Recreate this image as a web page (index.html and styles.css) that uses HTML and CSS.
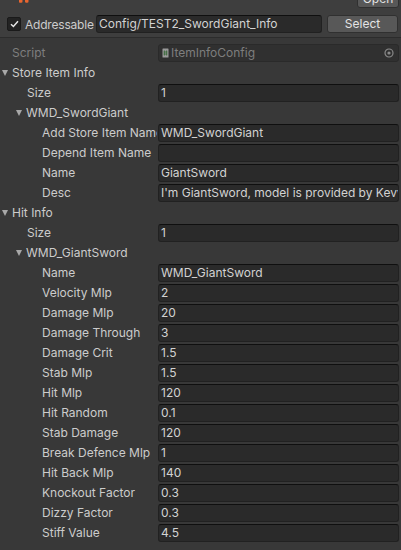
FILE: index.html
```html
<!DOCTYPE html>
<html>
<head>
<meta charset="utf-8">
<link rel="stylesheet" href="styles.css">
</head>
<body>
<div class="header">
  <div class="strip">
    <svg class="logo" width="10" height="4" viewBox="0 0 10 4"><path d="M0 0h3.5v1.2a1.4 1.4 0 0 1-1.4 1.6H1.4A1.4 1.4 0 0 1 0 1.2z M6 0h3.5v1.2a1.4 1.4 0 0 1-1.4 1.6H7.4A1.4 1.4 0 0 1 6 1.2z" fill="#e8652f"/></svg>
    <div class="btn open">Open</div>
  </div>
  <div class="addr-row">
    <span class="check"><svg width="9" height="8" viewBox="0 0 9 8"><path d="M1 4.2 3.4 6.5 8 1.2" fill="none" stroke="#e6e6e6" stroke-width="1.5"/></svg></span>
    <span class="addr-label">Addressable</span>
    <div class="field addr-field">Config/TEST2_SwordGiant_Info</div>
    <div class="btn select">Select</div>
  </div>
</div>
<div class="body">
  <div class="row disabled"><span class="label l0">Script</span><div class="field obj"><svg class="cs" width="7" height="10" viewBox="0 0 7 10"><rect x="0.5" y="0.5" width="6" height="9" rx="0.5" fill="#9a9a9a"/><path d="M2.4 2.5v5M4.6 2.5v5M1.6 4h3.8M1.6 6h3.8" stroke="#3e6b3e" stroke-width="0.9"/></svg><span class="objtext">ItemInfoConfig</span><svg class="target" width="10" height="10" viewBox="0 0 10 10"><circle cx="5" cy="5" r="4" fill="none" stroke="#8a8a8a" stroke-width="1.2"/><circle cx="5" cy="5" r="1.6" fill="#8a8a8a"/></svg></div></div>
  <div class="row"><span class="label fold f0"><i class="arrow"></i>Store Item Info</span></div>
  <div class="row"><span class="label l1">Size</span><div class="field">1</div></div>
  <div class="row"><span class="label fold f1"><i class="arrow"></i>WMD_SwordGiant</span></div>
  <div class="row"><span class="label l2">Add Store Item Name</span><div class="field">WMD_SwordGiant</div></div>
  <div class="row"><span class="label l2">Depend Item Name</span><div class="field"></div></div>
  <div class="row"><span class="label l2">Name</span><div class="field">GiantSword</div></div>
  <div class="row"><span class="label l2">Desc</span><div class="field">I'm GiantSword, model is provided by Kevvin</div></div>
  <div class="row"><span class="label fold f0"><i class="arrow"></i>Hit Info</span></div>
  <div class="row"><span class="label l1">Size</span><div class="field">1</div></div>
  <div class="row"><span class="label fold f1"><i class="arrow"></i>WMD_GiantSword</span></div>
  <div class="row"><span class="label l2">Name</span><div class="field">WMD_GiantSword</div></div>
  <div class="row"><span class="label l2">Velocity Mlp</span><div class="field">2</div></div>
  <div class="row"><span class="label l2">Damage Mlp</span><div class="field">20</div></div>
  <div class="row"><span class="label l2">Damage Through</span><div class="field">3</div></div>
  <div class="row"><span class="label l2">Damage Crit</span><div class="field">1.5</div></div>
  <div class="row"><span class="label l2">Stab Mlp</span><div class="field">1.5</div></div>
  <div class="row"><span class="label l2">Hit Mlp</span><div class="field">120</div></div>
  <div class="row"><span class="label l2">Hit Random</span><div class="field">0.1</div></div>
  <div class="row"><span class="label l2">Stab Damage</span><div class="field">120</div></div>
  <div class="row"><span class="label l2">Break Defence Mlp</span><div class="field">1</div></div>
  <div class="row"><span class="label l2">Hit Back Mlp</span><div class="field">140</div></div>
  <div class="row"><span class="label l2">Knockout Factor</span><div class="field">0.3</div></div>
  <div class="row"><span class="label l2">Dizzy Factor</span><div class="field">0.3</div></div>
  <div class="row"><span class="label l2">Stiff Value</span><div class="field">4.5</div></div>
</div>
</body>
</html>
```
FILE: styles.css
```css
html, body {
  margin: 0;
  padding: 0;
  background: #383838;
  font-family: Inter, "Noto Sans", sans-serif;
  font-size: 12px;
  color: #cccccc;
  overflow: hidden;
}
.header {
  background: #3e3e3e;
  height: 37px;
  border-bottom: 1px solid #2c2c2c;
}
.strip {
  height: 14px;
  display: flex;
  justify-content: space-between;
  align-items: flex-start;
  padding: 0 2px 0 19px;
}
.logo {
  display: block;
}
.btn {
  box-sizing: border-box;
  height: 18px;
  background: #585858;
  border: 1px solid #303030;
  border-radius: 3px;
  color: #e4e4e4;
  display: flex;
  align-items: center;
  justify-content: center;
  line-height: 16px;
}
.open {
  width: 42px;
  margin-top: -10px;
}
.addr-row {
  height: 20px;
  display: flex;
  align-items: center;
  padding-left: 7px;
}
.check {
  box-sizing: border-box;
  width: 14px;
  height: 14px;
  background: #232323;
  border: 1px solid #1a1a1a;
  border-radius: 2px;
  display: flex;
  align-items: center;
  justify-content: center;
}
.addr-label {
  margin-left: 4px;
  width: 71px;
  letter-spacing: -0.2px;
}
.field {
  box-sizing: border-box;
  height: 18px;
  background: #2a2a2a;
  border: 1px solid #212121;
  border-top-color: #0f0f0f;
  border-radius: 3px;
  color: #d2d2d2;
  padding-left: 2px;
  line-height: 16px;
  white-space: nowrap;
  overflow: hidden;
}
.addr-field {
  width: 226px;
}
.select {
  width: 71px;
  margin-left: 5px;
}
.body {
  padding-top: 5px;
}
.row {
  height: 20px;
  display: grid;
  grid-template-columns: 158px 241px;
  align-items: center;
}
.label {
  white-space: nowrap;
  overflow: hidden;
  line-height: 20px;
  display: flex;
  align-items: center;
}
.l0 { padding-left: 12px; }
.l1 { padding-left: 27px; }
.l2 { padding-left: 42px; width: 115px; }
.f0 { padding-left: 2px; }
.f1 { padding-left: 16px; }
.arrow {
  width: 0;
  height: 0;
  border-left: 3.5px solid transparent;
  border-right: 3.5px solid transparent;
  border-top: 6px solid #a8a8a8;
  margin-right: 4px;
}
.disabled .label {
  color: #7e7e7e;
}
.obj {
  display: flex;
  align-items: center;
  background: #303030;
  border-color: #2a2a2a;
  color: #7e7e7e;
  padding-left: 3px;
  padding-right: 4px;
}
.cs {
  flex: none;
}
.objtext {
  flex: 1;
  margin-left: 2px;
}
.target {
  flex: none;
}
```
